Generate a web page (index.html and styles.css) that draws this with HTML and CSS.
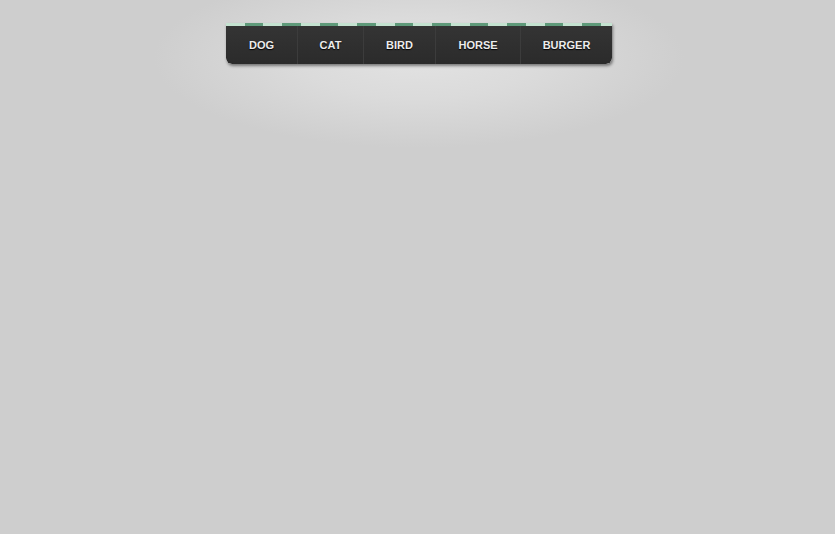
FILE: index.html
```html
<!DOCTYPE html>
<html>
<head>
<meta charset="utf-8">
<link rel="stylesheet" href="styles.css">
</head>
<body>
<div class="wrap">
  <nav class="menu">
    <a class="item item-dog" href="#">Dog</a>
    <a class="item item-cat" href="#">Cat</a>
    <a class="item item-bird" href="#">Bird</a>
    <a class="item item-horse" href="#">Horse</a>
    <a class="item item-burger" href="#">Burger</a>
  </nav>
</div>
</body>
</html>
```
FILE: styles.css
```css
html, body {
  margin: 0;
  height: 100%;
}
body {
  background-color: #cecece;
  background-image: radial-gradient(ellipse 265px 90px at 419px 58px, #e2e2e2 0%, #dbdbdb 45%, #cecece 100%);
  background-repeat: no-repeat;
  font-family: "Liberation Sans", Arial, sans-serif;
}
.wrap {
  display: flex;
  justify-content: center;
  padding: 23px 0 0 3px;
}
.menu {
  display: flex;
  border-top: 3px solid transparent;
  background:
    repeating-linear-gradient(90deg, #c4e2d0 0 18.75px, #5f9a7a 18.75px 37.5px) top left / 100% 3px no-repeat border-box,
    linear-gradient(#343434, #2b2b2b) padding-box;
  border-radius: 0 0 6px 6px;
  box-shadow: 1px 2px 3px rgba(0,0,0,0.45);
}
.item {
  display: block;
  box-sizing: border-box;
  height: 38px;
  line-height: 38px;
  text-align: center;
  color: #ececec;
  text-decoration: none;
  text-transform: uppercase;
  font-size: 11px;
  font-weight: bold;
  text-shadow: 0 1px 1px #000;
  border-left: 1px solid #3c3c3c;
}
.item-dog { width: 71px; border-left: none; }
.item-cat { width: 66px; }
.item-bird { width: 72px; }
.item-horse { width: 85px; }
.item-burger { width: 92px; }
```
